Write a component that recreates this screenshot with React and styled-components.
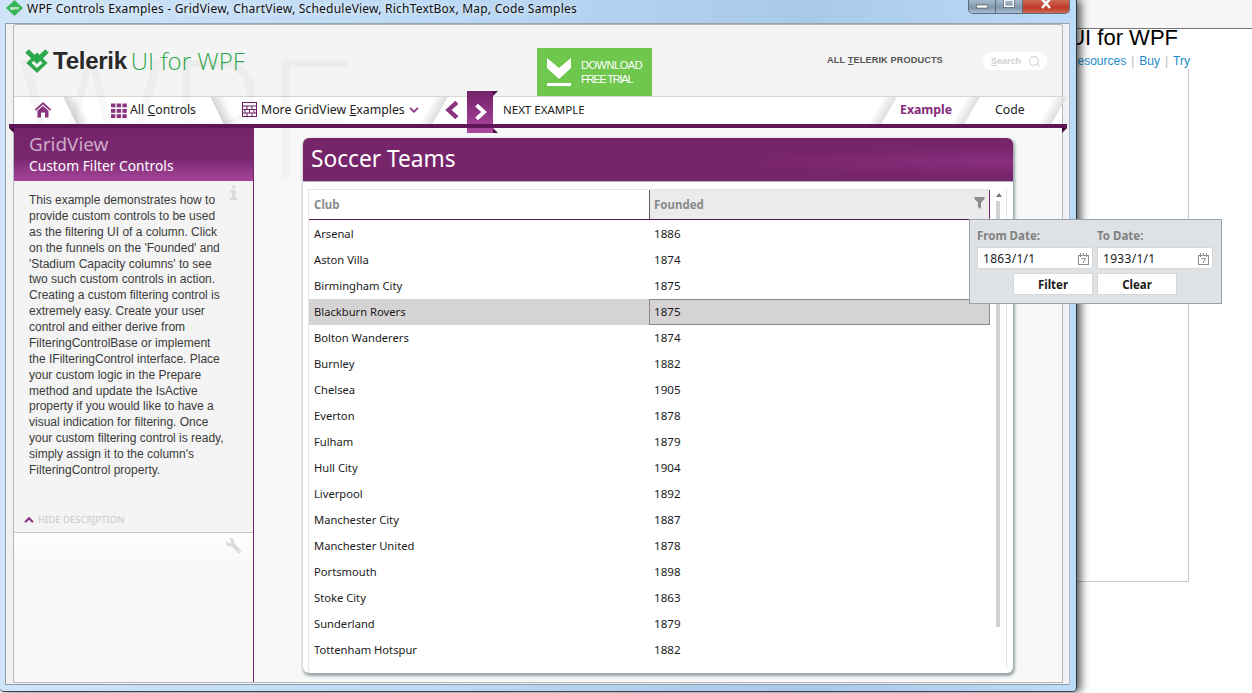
import React from 'react';
import styled, { createGlobalStyle } from 'styled-components';
import { FaWrench } from 'react-icons/fa';
import { Search } from 'lucide-react';

const Global = createGlobalStyle`
  html, body { margin: 0; padding: 0; background: #fff; overflow: hidden; }
  * { box-sizing: border-box; }
`;
const ui = `"Noto Sans", "Open Sans", sans-serif`;
const arial = `"Liberation Sans", Arial, sans-serif`;

const Desktop = styled.div`position: relative; width: 1252px; height: 693px; overflow: hidden; background: #fff; font-family: ${ui};`;

/* browser window behind */
const BackWindow = styled.div`position: absolute; inset: 0; display: flex; flex-direction: column;`;
const BackBand = styled.div`height: 29px; background: #f6f6f6; border-bottom: 1px solid #777; flex: none;`;
const BackHeading = styled.div`width: 1178px; height: 20px; margin-top: -1px; display: flex; justify-content: flex-end; font: 22px/20px ${arial}; color: #000; white-space: nowrap;`;
const BackLinks = styled.div`width: 1190px; margin-top: 5px; display: flex; justify-content: flex-end; gap: 4px; font: 12px/16px ${arial}; color: #1b8bc9; white-space: nowrap;`;
const BackSep = styled.span`color: #bbb; padding: 0 1px;`;
const BackBox = styled.div`width: 1189px; height: 513px; border-right: 1px solid #c8c8c8; border-bottom: 1px solid #c8c8c8;`;

/* app window */
const AppWindow = styled.div`
  position: absolute; left: 0; top: 0; width: 1077px; height: 692px; display: flex; flex-direction: column;
  padding: 0 6px 6px 5px; border-radius: 0 0 4px 4px;
  background: linear-gradient(90deg, #cfe4f8 0%, #bcd9f5 40%, #a9c9e9 75%, #bcdbf8 100%);
  border-right: 1px solid #2c3036; border-bottom: 1px solid #3d4650;
  box-shadow: 4px 0 9px rgba(0,0,0,.65);
`;
const TitleBar = styled.div`height: 23px; margin-left: -5px; flex: none; display: flex; align-items: flex-start; padding-left: 6px;`;
const TitleText = styled.div`font: 12px/17px ${ui}; letter-spacing: .22px; color: #101010; margin-left: 4px; white-space: nowrap; text-shadow: 0 0 6px #fff;`;
const WinButtons = styled.div`margin-left: auto; display: flex; height: 14px; border: 1px solid #5b6c7c; border-top: 0; border-radius: 0 0 5px 5px; overflow: hidden;`;
const WinButton = styled.div`
  width: ${p => p.$w}px; display: flex; align-items: flex-start; justify-content: center;
  background: ${p => p.$close ? 'linear-gradient(#cf6a55, #bd3a26 60%, #d06a52)' : 'linear-gradient(#a6bacd, #7f95aa 60%, #a9c0d6)'};
  border-right: ${p => p.$close ? 0 : '1px solid #5b6c7c'};
`;
const InnerFrame = styled.div`flex: 1; min-height: 0; display: flex; background: #f0f1f2; border: 1px solid #8e9aa6; border-right-color: #b0bcc8; padding: 1px 7px 2px 8px; border-top-color:#97a3ae;`;
const Client = styled.div`position: relative; flex: 1; display: flex; flex-direction: column; background: #f4f4f4; box-shadow: 0 0 0 1px #b5b8bb; border-radius: 2px 2px 0 0;`;
const Watermark = styled.div`position: absolute; left: 2px; top: 6px; font: 300 168px/168px "Open Sans", sans-serif; color: rgba(0,0,0,.028); pointer-events: none; z-index: 2; white-space: nowrap;`;

const Header = styled.div`height: 71px; flex: none; display: flex; align-items: flex-end; padding-left: 10px;`;
const LogoArea = styled.div`width: 513px; height: 100%; display: flex; align-items: center;`;
const LogoWord = styled.span`font: 700 24px/30px ${arial}; letter-spacing: -.25px; color: #2a2a2a; margin-left: 3px;`;
const LogoProduct = styled.span`font: 300 24px/30px "Open Sans", sans-serif; color: #2ca94d; margin-left: 4px; white-space: nowrap;`;
const Download = styled.div`width: 115px; height: 48px; background: #70c74e; display: flex; align-items: center; padding-left: 10px; gap: 10px;`;
const DownloadText = styled.div`display: flex; flex-direction: column;`;
const DownloadLine = styled.span`font: 11px/14px ${arial}; color: #fff; letter-spacing: ${p => p.$ls}px; white-space: nowrap;`;
const Products = styled.div`margin-left: 175px; width: 156px; height: 100%; display: flex; align-items: center; font: 700 9.2px/12px ${arial}; letter-spacing: .1px; color: #555; white-space: nowrap; padding-bottom: 1px;`;
const Pill = styled.div`width: 64px; height: 18px; align-self: flex-start; margin-top: 27px; background: #fff; border-radius: 9px; display: flex; align-items: center; justify-content: space-between; padding: 0 6px 0 8px; font: 700 9px/12px ${arial}; color: #cfcfcf;`;

const Nav = styled.nav`position: relative; height: 28px; flex: none; background: #fff; border-top: 1px solid #d6d6d6; display: flex; align-items: center; color: #222;`;
const NavItem = styled.div`position: relative; height: 100%; width: ${p => p.$w}px; padding: 0 0 2px ${p => p.$pl || 0}px; display: flex; align-items: center; gap: ${p => p.$gap || 4}px; flex: none; white-space: nowrap; font: ${p => p.$active ? 700 : 400} ${p => p.$fs || 12.3}px/18px ${ui}; color: ${p => p.$active ? '#862a7c' : '#222'};`;
const Slash = styled.i`
  position: absolute; top: 0; bottom: 0; width: 14px; right: ${p => p.$r}px;
  transform: skewX(${p => p.$back ? 26 : -30}deg);
  background: ${p => p.$back ? 'linear-gradient(90deg, #d4d4d4, rgba(255,255,255,0))' : 'linear-gradient(270deg, #dedede, rgba(255,255,255,0))'};
`;
const Spacer = styled.div`flex: 1;`;
const NextTab = styled.div`
  position: absolute; left: 453px; top: -6px; width: 26px; height: 42px; display: flex; align-items: center; justify-content: center;
  background: linear-gradient(#72226a, #ad479d); z-index: 3;
  &::before, &::after { content: ''; position: absolute; left: 100%; width: 0; height: 0; border-left: 5px solid #4f0f4c; }
  &::before { top: 0; border-bottom: 5px solid transparent; }
  &::after { bottom: 0; border-top: 5px solid transparent; }
`;
const PurpleBar = styled.div`
  position: relative; height: 4px; flex: none; margin: 0 -5px; background: #5f1659; z-index: 3;
  &::before, &::after { content: ''; position: absolute; top: 4px; width: 0; height: 0; border-top: 5px solid #3c0a39; }
  &::before { left: 0; border-left: 5px solid transparent; }
  &::after { right: 0; border-right: 5px solid transparent; }
`;
const Body = styled.div`flex: 1; min-height: 0; display: flex;`;
const Side = styled.aside`position: relative; z-index: 3; width: 240px; flex: none; display: flex; flex-direction: column; border-right: 1px solid #77256e; background: #f4f4f4;`;
const SideHead = styled.div`height: 53px; flex: none; padding: 4px 0 0 15px; background: linear-gradient(#76246b 0%, #78266d 55%, #a5459a 100%);`;
const SideTitle = styled.div`font: 18.9px/25px ${ui}; color: #cda9c9;`;
const SideSub = styled.div`font: 13.8px/18px ${ui}; color: #fff; white-space: nowrap;`;
const Desc = styled.div`position: relative; flex: 1; padding: 12px 0 0 15px; font: 12px/15.88px ${arial}; color: #3a3a3a; white-space: nowrap;`;
const DescLine = styled.div``;
const InfoMark = styled.div`position: absolute; right: 15px; top: 4px; line-height: 0;`;
const HideRow = styled.div`height: 31px; flex: none; display: flex; align-items: center; gap: 4px; padding: 6px 0 0 10px; font: 9.5px/12px ${ui}; color: #c9c9cd; border-bottom: 1px solid #bfc8cf; white-space: nowrap;`;
const SideFoot = styled.div`height: 149px; flex: none; display: flex; justify-content: flex-end; padding: 5px 12px 0 0; background: linear-gradient(#fff, #f8f8f8 20%);`;

const Content = styled.main`flex: 1; min-width: 0; background: #f8f8f8; padding: 10px 49px 9px 49px; display: flex;`;
const Card = styled.section`position: relative; z-index: 3; flex: 1; display: flex; flex-direction: column; background: #fff; border-radius: 6px; box-shadow: 1px 2px 3px 1px rgba(120,135,140,.75);`;
const CardHead = styled.div`height: 44px; flex: none; border-radius: 6px 6px 0 0; padding-left: 8px; font: 22.7px/42px ${ui}; color: #fff; background: radial-gradient(ellipse 260px 14px at 100% 55%, #8a2f7e, rgba(138,47,126,0)), #77256a; border-bottom: 1px solid #aab6bd;`;
const CardBody = styled.div`flex: 1; min-height: 0; display: flex; padding: 7px 5px 0 5px; position: relative;`;
const GridWrap = styled.div`width: 682px; flex: none; border-left: 1px solid #e6e6e6; font: 11.6px/16px ${ui}; color: #1a1a1a;`;
const HeadRow = styled.div`display: grid; grid-template-columns: 340px 341px; height: 31px; border-top: 1px solid #e4e4e4; border-bottom: 1px solid #5a1650;`;
const HeadCell = styled.div`position: relative; display: flex; align-items: center; padding-left: 5px; font-weight: 700; color: #8a8a8a; font-size: 11.5px; background: ${p => p.$filter ? '#ebebeb' : '#fff'}; ${p => p.$filter && 'border-left: 1px solid #6d5a6b; border-right: 1px solid #77256e; padding-left: 4px;'}`;
const FunnelSpot = styled.div`position: absolute; right: 4px; top: 7px; line-height: 0;`;
const Row = styled.div`display: grid; grid-template-columns: 340px 341px; height: 26px; background: ${p => p.$sel ? '#d5d3d4' : 'transparent'};`;
const RowGap = styled.div`height: 1px;`;
const NameCell = styled.div`display: flex; align-items: center; padding-left: 5px; font-size: 11.2px; white-space: nowrap;`;
const YearCell = styled.div`display: flex; align-items: center; padding-left: 5px; ${p => p.$boxed && 'border: 1px solid #8a8a8a; padding-left: 4px;'}`;
const ScrollCol = styled.div`width: 17px; flex: none; border-right: 1px solid #e2e2e2; padding-left: 6px; display: flex; flex-direction: column; margin-bottom: 5px;`;
const ScrollUp = styled.div`height: 12px; display: flex; align-items: center; line-height: 0;`;
const Thumb = styled.div`width: 4px; height: 426px; background: #d2d2d2;`;

const Popup = styled.div`
  position: absolute; left: 666px; top: 37px; width: 253px; height: 85px; z-index: 5;
  background: #dfe2e5; border: 1px solid #98a1ac; padding: 5px 7px 0 7px;
  display: grid; grid-template-columns: 116px 116px; column-gap: 4px; grid-template-rows: 18px 22px 22px; row-gap: 4px; align-content: start;
  font: 12px/16px ${ui}; color: #1a1a1a;
`;
const PopLabel = styled.div`font-weight: 700; color: #808080; font-size: 11.5px; align-self: end; position: relative; top: 1px;`;
const DateBox = styled.div`background: #fff; border: 1px solid #d5d8db; display: flex; align-items: center; justify-content: space-between; padding: 1px 3px 0 5px; letter-spacing: .3px;`;
const PopButton = styled.div`width: 80px; background: #fff; border: 1px solid #d5d8db; padding-top: 1px; display: flex; align-items: center; justify-content: center; font-weight: 700; font-size: 11.5px; justify-self: ${p => p.$end ? 'end' : 'start'};`;
const U = styled.span`text-decoration: underline;`;

const desc = [
  'This example demonstrates how to', 'provide custom controls to be used', 'as the filtering UI of a column. Click',
  "on the funnels on the 'Founded' and", "'Stadium Capacity columns' to see", 'two such custom controls in action.',
  'Creating a custom filtering control is', 'extremely easy. Create your user', 'control and either derive from',
  'FilteringControlBase or implement', 'the IFilteringControl interface. Place', 'your custom logic in the Prepare',
  'method and update the IsActive', 'property if you would like to have a', 'visual indication for filtering. Once',
  'your custom filtering control is ready,', "simply assign it to the column's", 'FilteringControl property.',
];
const teams = [
  ['Arsenal', 1886], ['Aston Villa', 1874], ['Birmingham City', 1875], ['Blackburn Rovers', 1875], ['Bolton Wanderers', 1874],
  ['Burnley', 1882], ['Chelsea', 1905], ['Everton', 1878], ['Fulham', 1879], ['Hull City', 1904], ['Liverpool', 1892],
  ['Manchester City', 1887], ['Manchester United', 1878], ['Portsmouth', 1898], ['Stoke City', 1863], ['Sunderland', 1879], ['Tottenham Hotspur', 1882],
];

const AppIcon = () => (
  <svg width="17" height="16" viewBox="0 0 17 16"><path d="M8.5 0 17 8 8.5 16 0 8Z" fill="#3bb35a"/><text x="8.5" y="9.5" textAnchor="middle" fontSize="4" fontWeight="700" fill="#fff" fontFamily="Liberation Sans">WPF</text></svg>
);
const Logo = () => (
  <svg width="26" height="25" viewBox="24 45.5 26 25" fill="none" stroke="#2ca94d">
    <path d="M27 48.5 L37 58 L47 48.5" strokeWidth="5" />
    <path d="M37 52.5 L45 60.5 L37 68 L29 60.5Z" strokeWidth="3.6" />
  </svg>
);
const HomeIcon = () => (
  <svg width="18" height="17" viewBox="0 0 18 17"><path d="M9 1 0.8 8.4 2 9.8 9 3.6 16 9.8 17.2 8.4Z" fill="#8a3380"/><path d="M3.5 9.8 9 5 14.5 9.8V16.5H11V11.5H7V16.5H3.5Z" fill="#8a3380"/></svg>
);
const DotsIcon = () => (
  <svg width="16" height="16" viewBox="0 0 16 16" fill="#8a3380">
    {[0, 5.7, 11.4].flatMap(x => [1.5, 7, 12.2].map(y => <rect key={`${x}-${y}`} x={x} y={y} width="4.4" height="3.8" />))}
  </svg>
);
const TableIcon = () => (
  <svg width="15" height="15" viewBox="0 0 15 15" fill="none" stroke="#6d1f64"><rect x=".5" y=".5" width="14" height="14" /><path d="M.5 4H14.5M.5 7.5H14.5M.5 11H14.5M5 4V7.5M10 4V7.5M3 7.5V11M7.5 7.5V11M12 7.5V11M5 11V14.5M10 11V14.5" /></svg>
);
const Chevron = ({ dir, size = 14, color = '#8a3380', w = 3.2 }) => {
  const d = dir === 'l' ? 'M10 1 3.5 7 10 13' : dir === 'r' ? 'M4 1 10.5 7 4 13' : dir === 'd' ? 'M1.5 4 7 9.5 12.5 4' : 'M1.5 10 7 4.5 12.5 10';
  return <svg width={size} height={size} viewBox="0 0 14 14" fill="none" stroke={color} strokeWidth={w}><path d={d} /></svg>;
};
const Funnel = ({ color = '#8c8c8c' }) => (
  <svg width="11" height="12" viewBox="0 0 11 12"><path d="M.5 0H10.5V2L7 5.5V12L4 10V5.5L.5 2Z" fill={color} /></svg>
);
const Calendar = () => (
  <svg width="11" height="12" viewBox="0 0 11 12" fill="none" stroke="#8c8c8c"><rect x=".5" y="2.5" width="10" height="9" /><path d="M2.5 0V4M8.5 0V4M5.5 0V3" /><path d="M3.5 5.5H7.5L5 10" /></svg>
);

export default function App() {
  return (
    <Desktop>
      <Global />
      <BackWindow>
        <BackBand />
        <BackHeading>Telerik UI for WPF</BackHeading>
        <BackLinks><span>Resources</span><BackSep>|</BackSep><span>Buy</span><BackSep>|</BackSep><span>Try</span></BackLinks>
        <BackBox />
      </BackWindow>
      <AppWindow>
        <TitleBar>
          <AppIcon />
          <TitleText>WPF Controls Examples - GridView, ChartView, ScheduleView, RichTextBox, Map, Code Samples</TitleText>
          <WinButtons>
            <WinButton $w={27}><svg width="12" height="12" viewBox="0 0 12 12"><rect x="0.5" y="5" width="11" height="3" fill="#fff" stroke="#44505c" strokeWidth=".6"/></svg></WinButton>
            <WinButton $w={27}><svg width="12" height="10" viewBox="0 0 12 10"><rect x="1.5" y="0" width="9" height="6.5" fill="none" stroke="#fff" strokeWidth="1.6"/><rect x=".6" y="-.8" width="10.8" height="8.4" fill="none" stroke="#44505c" strokeWidth=".6"/></svg></WinButton>
            <WinButton $w={46} $close><svg width="14" height="11" viewBox="0 0 14 11"><path d="M3 -1 11 8M11 -1 3 8" stroke="#fff" strokeWidth="2.6"/></svg></WinButton>
          </WinButtons>
        </TitleBar>
        <InnerFrame>
          <Client>
            <Watermark>WPF</Watermark>
            <Header>
              <LogoArea>
                <Logo />
                <LogoWord>Telerik</LogoWord>
                <LogoProduct>UI for WPF</LogoProduct>
              </LogoArea>
              <Download>
                <svg width="24" height="28" viewBox="0 0 24 28" fill="#fff"><path d="M0 0 12 10 24 0V10L12 21 0 10Z"/><rect y="25" width="24" height="3"/></svg>
                <DownloadText>
                  <DownloadLine $ls={-.45}>DOWNLOAD</DownloadLine>
                  <DownloadLine $ls={-1.2}>FREE TRIAL</DownloadLine>
                </DownloadText>
              </Download>
              <Products>ALL&nbsp;<U>T</U>ELERIK PRODUCTS</Products>
              <Pill><span><U>S</U>earch</span><Search size={13} color="#d4d4d4" strokeWidth={2} /></Pill>
            </Header>
            <Nav>
              <NavItem $w={71} $pl={20}><HomeIcon /><Slash $back $r={1} /></NavItem>
              <NavItem $w={146} $pl={26} $gap={3}><DotsIcon /><span>All <U>C</U>ontrols</span><Slash $back $r={0} /></NavItem>
              <NavItem $w={210} $pl={11} $gap={4}><TableIcon /><span>More GridView <U>E</U>xamples</span><Chevron dir="d" size={10} w={2.6} /><Slash $r={1} /></NavItem>
              <NavItem $w={36} $pl={3}><Chevron dir="l" size={18} w={3.4} /></NavItem>
              <NextTab><Chevron dir="r" size={16} color="#fff" w={3.4} /></NextTab>
              <NavItem $w={130} $pl={26} $fs={11.5}>NEXT EXAMPLE</NavItem>
              <Spacer />
              <NavItem $w={84} $pl={9} $active><Slash $r={86} />Example</NavItem>
              <NavItem $w={87} $pl={20}><Slash $r={90} />Code<Slash $r={3} /></NavItem>
            </Nav>
            <PurpleBar />
            <Body>
              <Side>
                <SideHead>
                  <SideTitle>GridView</SideTitle>
                  <SideSub>Custom Filter Controls</SideSub>
                </SideHead>
                <Desc>
                  {desc.map(l => <DescLine key={l}>{l}</DescLine>)}
                  <InfoMark><svg width="9" height="15" viewBox="0 0 9 15" fill="#d9dddd"><circle cx="4.5" cy="2" r="2"/><path d="M1 5H6.5V12.5H8.5V15H.5V12.5H3V7.5H1Z"/></svg></InfoMark>
                </Desc>
                <HideRow><Chevron dir="u" size={10} w={3} /><span>HIDE DESCR<U>I</U>PTION</span></HideRow>
                <SideFoot><FaWrench size={15} color="#d9dcdc" style={{ transform: 'scaleX(-1)' }} /></SideFoot>
              </Side>
              <Content>
                <Card>
                  <CardHead>Soccer Teams</CardHead>
                  <CardBody>
                    <GridWrap>
                      <HeadRow>
                        <HeadCell>Club</HeadCell>
                        <HeadCell $filter>Founded<FunnelSpot><Funnel /></FunnelSpot></HeadCell>
                      </HeadRow>
                      <RowGap />
                      {teams.map(([c, y]) => (
                        <Row key={c} $sel={c === 'Blackburn Rovers'}>
                          <NameCell>{c}</NameCell>
                          <YearCell $boxed={c === 'Blackburn Rovers'}>{y}</YearCell>
                        </Row>
                      ))}
                    </GridWrap>
                    <ScrollCol>
                      <ScrollUp><svg width="6" height="4" viewBox="0 0 6 4"><path d="M3 0 6 4H0Z" fill="#777"/></svg></ScrollUp>
                      <Thumb />
                    </ScrollCol>
                    <Popup>
                      <PopLabel>From Date:</PopLabel>
                      <PopLabel>To Date:</PopLabel>
                      <DateBox>1863/1/1<Calendar /></DateBox>
                      <DateBox>1933/1/1<Calendar /></DateBox>
                      <PopButton $end>Filter</PopButton>
                      <PopButton>Clear</PopButton>
                    </Popup>
                  </CardBody>
                </Card>
              </Content>
            </Body>
          </Client>
        </InnerFrame>
      </AppWindow>
    </Desktop>
  );
}
